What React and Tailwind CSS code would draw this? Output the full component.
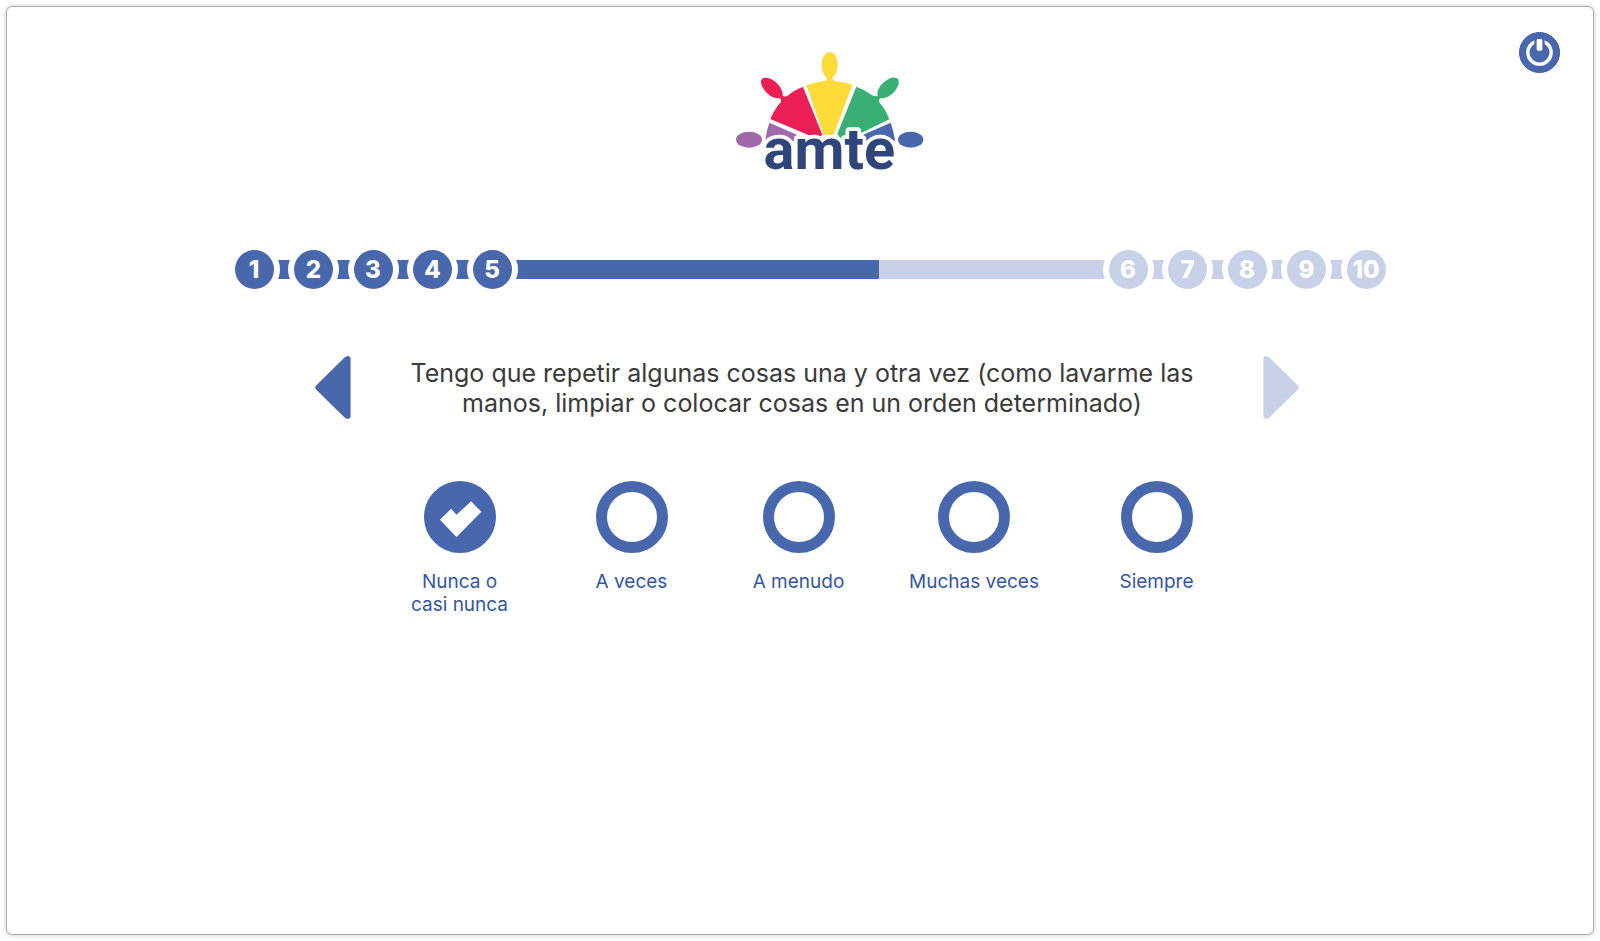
import { useState } from "react";

const STEPS_DONE = [1, 2, 3, 4, 5];
const STEPS_LEFT = [6, 7, 8, 9, 10];

const OPTIONS = [
  { id: "nunca", label: <>Nunca o<br />casi nunca</> },
  { id: "aveces", label: "A veces" },
  { id: "amenudo", label: "A menudo" },
  { id: "muchas", label: "Muchas veces" },
  { id: "siempre", label: "Siempre" },
];

function Logo() {
  return (
    <svg viewBox="45 36 567 417" className="h-[139px] w-[189px] overflow-visible" role="img" aria-label="amte">
      <g fill="#9f69aa">
        <ellipse cx="87" cy="299" rx="39" ry="24" />
        <path d="M148 248L239 288Q237 296 232 302L136 302Q139 272 148 248Z" />
      </g>
      <path fill="#eb1e56" d="M124 119C130 109 150 112 166 125C182 138 190 156 188 168Q196 171 203 167Q224 149 249 141L307 284L292 296L151 237Q163 208 183 186Q184 180 180 174C166 177 148 168 137 155C126 142 120 128 124 119Z" />
      <path fill="#ffdb3a" d="M329 36C343 36 353 53 353 75C353 91 346 106 337 113Q337 120 344 123Q371 125 397 135L341 284L311 284L259 136Q286 125 314 123Q321 120 321 113C311 106 305 91 305 75C305 53 315 36 329 36Z" />
      <path fill="#3aaf73" d="M535 119C529 109 511 111 495 124C478 137 470 154 473 167Q465 171 457 166Q435 149 409 140L352 282L365 300L430 276L508 238Q497 208 477 186Q476 180 480 174C494 177 512 168 523 155C534 142 539 128 535 119Z" />
      <g fill="#4867ad">
        <ellipse cx="572" cy="299" rx="38" ry="24" />
        <path d="M512 248L430 284L430 302L525 302Q521 272 512 248Z" />
      </g>
      <text
        x="328"
        y="386"
        textAnchor="middle"
        fontSize="173"
        fill="#2f467c"
        stroke="#ffffff"
        strokeWidth="22"
        strokeLinejoin="round"
        paintOrder="stroke"
        className="font-['Roboto',sans-serif] font-bold"
      >
        amte
      </text>
    </svg>
  );
}

function PowerIcon() {
  return (
    <svg viewBox="0 0 123 123" className="size-[41px]" aria-hidden="true">
      <circle cx="61.5" cy="61.5" r="60" fill="#4867ad" stroke="#3a5ca8" strokeWidth="3" />
      <circle cx="61.5" cy="61.5" r="35" fill="none" stroke="#fff" strokeWidth="10" />
      <path d="M46 18h31v32H46z" fill="#4867ad" />
      <rect x="53" y="21" width="17" height="35" rx="4" fill="#fff" />
    </svg>
  );
}

function ArrowIcon({ className }) {
  return (
    <svg viewBox="0 0 108 190" className={"h-[63px] w-9 " + className} aria-hidden="true">
      <path fill="currentColor" d="M3 89L88 5Q94 0 100 0Q107 1 107 8V182Q107 189 100 190Q94 190 88 185L3 101Q-2 95 3 89Z" />
    </svg>
  );
}

function Steps({ items, done }) {
  return (
    <ol className="flex w-[277px] justify-between">
      {items.map((n) => (
        <li
          key={n}
          className={
            "flex size-[39px] items-center justify-center rounded-full text-2xl leading-none font-extrabold text-white ring-[6px] ring-white " +
            (done ? "bg-[#4867ad]" : "bg-[#c8d1e7]")
          }
        >
          {n}
        </li>
      ))}
    </ol>
  );
}

export default function App() {
  const [answer, setAnswer] = useState("nunca");

  return (
    <div className="flex min-h-screen bg-white p-1.5 font-['Inter',sans-serif]">
      <main className="grow rounded-md border border-[#acacac] bg-white shadow-[0_0_5px_rgba(0,0,0,0.22)]">
        <header className="grid grid-cols-[1fr_auto_1fr] items-start pt-[25px] pr-[33px] pl-[92px]">
          <div className="col-start-2 pt-5">
            <Logo />
          </div>
          <button type="button" aria-label="Salir" className="cursor-pointer justify-self-end rounded-full">
            <PowerIcon />
          </button>
        </header>

        <section aria-label="Progreso" className="mt-[59px] pl-5">
          <div className="mx-auto grid max-w-[1151px] items-center">
            <div className="col-start-1 row-start-1 mx-5 h-[19px] bg-[#c8d1e7]">
              <div className="h-full w-9/16 bg-[#4867ad]" />
            </div>
            <div className="col-start-1 row-start-1 flex justify-between">
              <Steps items={STEPS_DONE} done />
              <Steps items={STEPS_LEFT} />
            </div>
          </div>
        </section>

        <section className="mt-[67px] pl-3.5">
          <div className="mx-auto flex max-w-[984px] items-center justify-between">
            <button type="button" aria-label="Anterior" className="cursor-pointer text-[#4867ad]">
              <ArrowIcon className="block" />
            </button>
            <h1 className="pr-2.5 text-center text-[25px] leading-[30px] font-normal text-[#3a3a3a]">
              Tengo que repetir algunas cosas una y otra vez (como lavarme las
              <br />
              manos, limpiar o colocar cosas en un orden determinado)
            </h1>
            <button type="button" aria-label="Siguiente" className="cursor-pointer text-[#c8d1e7]">
              <ArrowIcon className="block rotate-180" />
            </button>
          </div>
        </section>

        <fieldset aria-label="Respuesta" className="mt-[62px] pl-[18px]">
          <div className="mx-auto grid max-w-[871px] grid-cols-[172fr_172fr_162fr_189fr_176fr]">
            {OPTIONS.map((o) => (
              <label
                key={o.id}
                htmlFor={o.id}
                className="flex cursor-pointer flex-col items-center gap-[17px] text-center text-[19px] leading-[23px] text-[#3455a4]"
              >
                <span className="grid">
                  <input
                    type="radio"
                    id={o.id}
                    name="respuesta"
                    checked={answer === o.id}
                    onChange={() => setAnswer(o.id)}
                    className="peer col-start-1 row-start-1 size-[72px] cursor-pointer appearance-none rounded-full border-[11px] border-[#4867ad] checked:bg-[#4867ad]"
                  />
                  <svg
                    viewBox="0 0 217 217"
                    className="pointer-events-none invisible col-start-1 row-start-1 size-[72px] peer-checked:visible"
                    aria-hidden="true"
                  >
                    <path fill="#fff" d="M48 117L82 84L98 102L142 61L173 93L98 169Z" />
                  </svg>
                </span>
                <span>{o.label}</span>
              </label>
            ))}
          </div>
        </fieldset>
      </main>
    </div>
  );
}
